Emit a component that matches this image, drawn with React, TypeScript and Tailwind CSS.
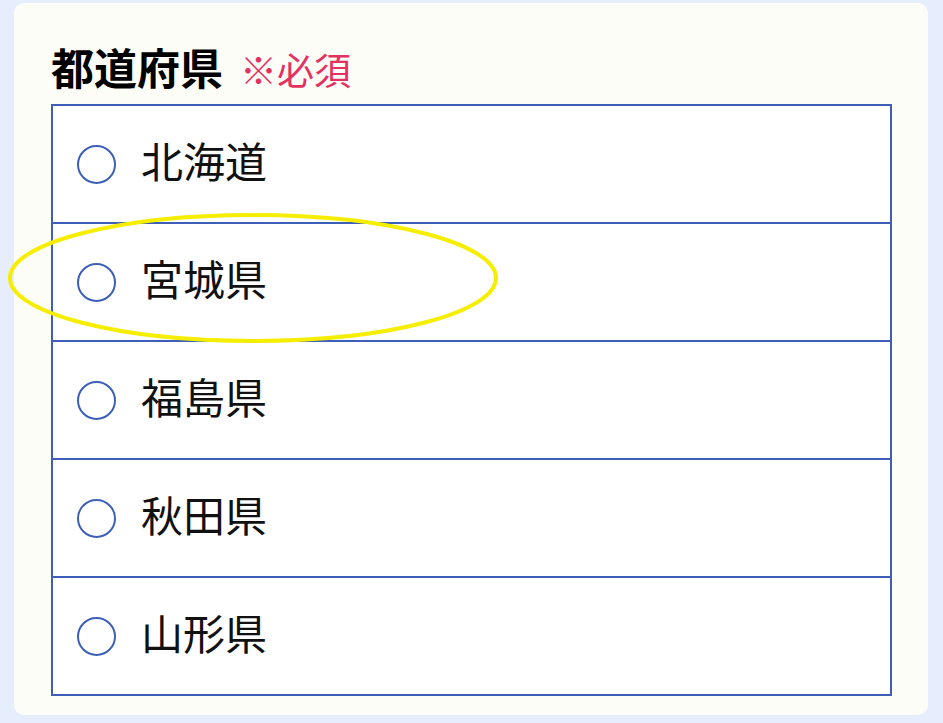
const prefectures = ["北海道", "宮城県", "福島県", "秋田県", "山形県"];

export default function App() {
  return (
    <div
      className="relative w-[943px] h-[723px] bg-[#e6edfd] pt-[3px] pl-[14px]"
      style={{ fontFamily: '"Noto Sans CJK JP", "Noto Sans", sans-serif' }}
    >
      <div className="w-[914px] h-[712px] rounded-[10px] bg-[#fdfdf8] pl-[37px] pt-[42px]">
        <div className="flex items-baseline gap-[17px] leading-none">
          <h2 className="text-[43px] font-bold text-black">都道府県</h2>
          <span className="text-[37px] text-[#e3325f]">※必須</span>
        </div>
        <div className="mt-[16px] w-[841px] border-2 border-[#3d5fb8] bg-white">
          {prefectures.map((name, i) => (
            <label
              key={name}
              className={`flex items-center pl-[24px] ${
                i > 0 ? "h-[118px] border-t-2 border-[#3d5fb8]" : "h-[116px]"
              }`}
            >
              <span className="h-[39px] w-[39px] rounded-full border-2 border-[#3d5fb8] bg-white" />
              <span className="ml-[25px] pb-[8px] text-[42px] leading-none text-[#111]">{name}</span>
            </label>
          ))}
        </div>
      </div>
      {/* highlight annotation */}
      <svg className="pointer-events-none absolute left-0 top-0" width="943" height="723">
        <ellipse cx="253" cy="278" rx="243" ry="63" fill="none" stroke="#f6ee00" strokeWidth="4" />
      </svg>
    </div>
  );
}
